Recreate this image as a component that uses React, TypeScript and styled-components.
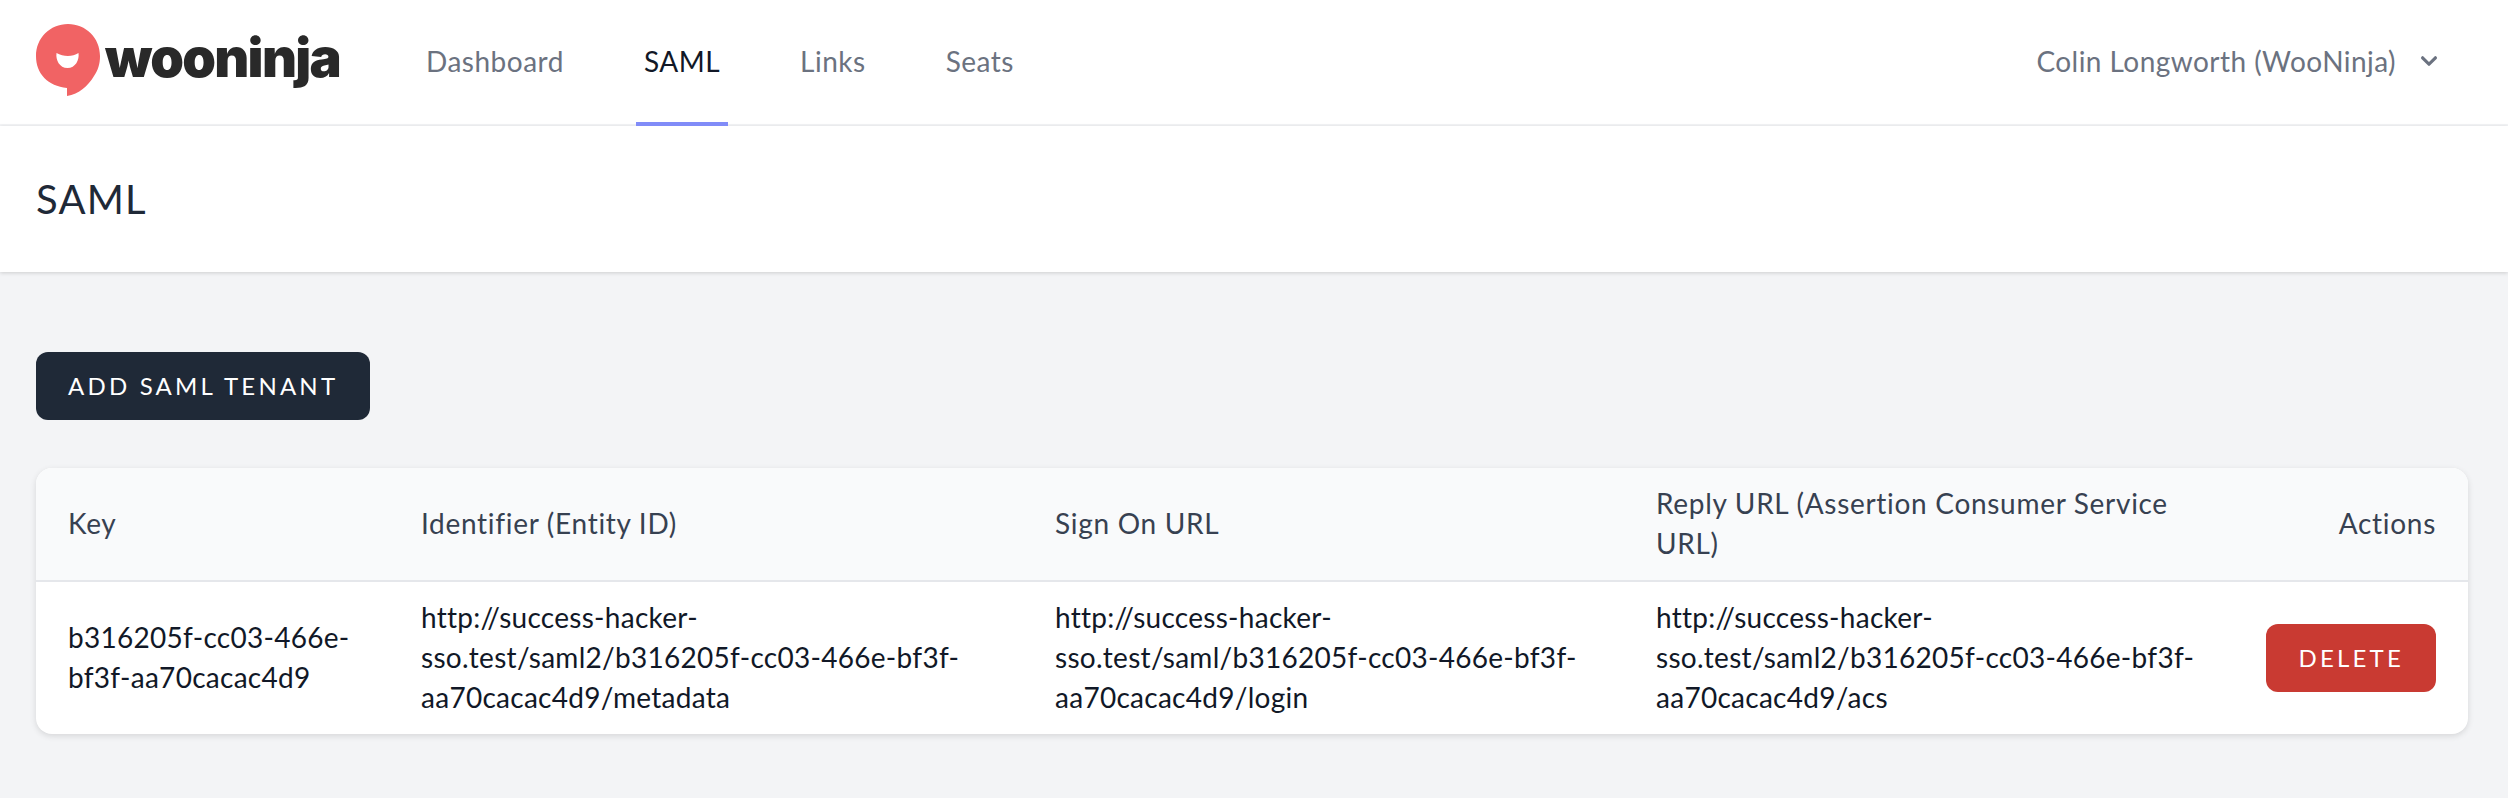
import styled, { createGlobalStyle } from "styled-components";

const GlobalStyle = createGlobalStyle`
  html, body {
    margin: 0;
    padding: 0;
    background: #f3f4f6;
  }
  body {
    font-family: "Lato", "Noto Sans", sans-serif;
    color: #111827;
  }
  * {
    box-sizing: border-box;
  }
`;

const Page = styled.div`
  min-height: 798px;
  background: #f3f4f6;
`;

const TopNav = styled.nav`
  height: 126px;
  padding: 0 63px 0 36px;
  display: flex;
  justify-content: space-between;
  background: #fff;
  box-shadow: inset 0 -2px 0 #f3f4f6;
`;

const NavLeft = styled.div`
  display: flex;
  align-items: stretch;
`;

const Logo = styled.div`
  width: 318px;
  display: flex;
  align-items: center;
  gap: 4px;
  margin-top: -6px;
`;

const LogoText = styled.span`
  font-family: "Inter", sans-serif;
  font-weight: 900;
  font-size: 54px;
  line-height: 1;
  letter-spacing: -1.7px;
  color: #292929;
  margin-top: -4px;
`;

const NavLinks = styled.div`
  display: flex;
  gap: 64px;
  margin-left: 64px;
`;

const NavLink = styled.a<{ $active?: boolean }>`
  display: flex;
  align-items: center;
  padding: 0 8px;
  font-size: 28px;
  letter-spacing: 0.5px;
  color: ${(props) => (props.$active ? "#111827" : "#6b7280")};
  border-bottom: 4px solid ${(props) => (props.$active ? "#818cf8" : "transparent")};
`;

const UserMenu = styled.div`
  display: flex;
  align-items: center;
  gap: 17px;
  font-size: 28px;
  letter-spacing: 0.45px;
  color: #6b7280;
  margin-top: -4px;

  svg {
    width: 32px;
    height: 32px;
    fill: currentColor;
  }
`;

const PageHeader = styled.header`
  background: #fff;
  padding: 45px 36px;
  box-shadow: 0 1px 4px rgba(0, 0, 0, 0.16);
`;

const Title = styled.h2`
  margin: 0;
  font-size: 40px;
  line-height: 56px;
  letter-spacing: 1.2px;
  font-weight: 400;
  color: #1f2937;
`;

const Main = styled.main`
  padding: 80px 40px 64px 36px;
`;

const Button = styled.button<{ $danger?: boolean }>`
  height: 68px;
  padding: 0 32px 2px;
  border: 0;
  border-radius: 12px;
  font-family: inherit;
  font-size: 24px;
  letter-spacing: 3.2px;
  text-transform: uppercase;
  color: #fff;
  background: ${(props) => (props.$danger ? "#c93a32" : "#1f2937")};
`;

const Card = styled.div`
  margin-top: 48px;
  background: #fff;
  border-radius: 16px;
  overflow: hidden;
  box-shadow: 0 2px 6px rgba(0, 0, 0, 0.12);
`;

const Table = styled.table`
  width: 100%;
  table-layout: fixed;
  border-collapse: collapse;
  font-size: 28px;
  line-height: 40px;
`;

const Col = styled.col<{ $width: number }>`
  width: ${(props) => props.$width}px;
`;

const HeadRow = styled.tr`
  background: #f9fafb;
  border-bottom: 2px solid #e5e7eb;
`;

const HeadCell = styled.th<{ $right?: boolean }>`
  padding: 15px 32px 17px;
  font-weight: 400;
  letter-spacing: 0.7px;
  color: #374151;
  text-align: ${(props) => (props.$right ? "right" : "left")};
`;

const Cell = styled.td<{ $right?: boolean }>`
  padding: 15px 32px 17px;
  letter-spacing: 0.28px;
  color: #111827;
  text-align: ${(props) => (props.$right ? "right" : "left")};
  overflow-wrap: anywhere;
`;

const ActionCell = styled(Cell)`
  padding: 16px 32px;
`;

function Bubble() {
  return (
    <svg width="65" height="72" viewBox="0 0 65 72">
      <path
        d="M32 0C50 0 64 14 64 32c0 8-2 14-6 20-6 10-15 18-27 20v-8C12 62 0 50 0 32 0 14 14 0 32 0z"
        fill="#f16364"
      />
      <path
        d="M20.5 29c7 4 16 4 22 0 1 7-3 15-11 15s-12-8-11-15z"
        fill="#fff"
      />
    </svg>
  );
}

function App() {
  return (
    <Page>
      <GlobalStyle />
      <TopNav>
        <NavLeft>
          <Logo>
            <Bubble />
            <LogoText>wooninja</LogoText>
          </Logo>
          <NavLinks>
            <NavLink>Dashboard</NavLink>
            <NavLink $active>SAML</NavLink>
            <NavLink>Links</NavLink>
            <NavLink>Seats</NavLink>
          </NavLinks>
        </NavLeft>
        <UserMenu>
          Colin Longworth (WooNinja)
          <svg viewBox="0 0 20 20">
            <path d="M5.293 7.293a1 1 0 011.414 0L10 10.586l3.293-3.293a1 1 0 111.414 1.414l-4 4a1 1 0 01-1.414 0l-4-4a1 1 0 010-1.414z" />
          </svg>
        </UserMenu>
      </TopNav>
      <PageHeader>
        <Title>SAML</Title>
      </PageHeader>
      <Main>
        <Button>Add SAML Tenant</Button>
        <Card>
          <Table>
            <colgroup>
              <Col $width={353} />
              <Col $width={634} />
              <Col $width={601} />
              <Col $width={609} />
              <Col $width={235} />
            </colgroup>
            <thead>
              <HeadRow>
                <HeadCell>Key</HeadCell>
                <HeadCell>Identifier (Entity ID)</HeadCell>
                <HeadCell>Sign On URL</HeadCell>
                <HeadCell>Reply URL (Assertion Consumer Service URL)</HeadCell>
                <HeadCell $right>Actions</HeadCell>
              </HeadRow>
            </thead>
            <tbody>
              <tr>
                <Cell>b316205f-cc03-466e-bf3f-aa70cacac4d9</Cell>
                <Cell>http://success-hacker-sso.test/saml2/b316205f-cc03-466e-bf3f-aa70cacac4d9/metadata</Cell>
                <Cell>http://success-hacker-sso.test/saml/b316205f-cc03-466e-bf3f-aa70cacac4d9/login</Cell>
                <Cell>http://success-hacker-sso.test/saml2/b316205f-cc03-466e-bf3f-aa70cacac4d9/acs</Cell>
                <ActionCell $right>
                  <Button $danger>Delete</Button>
                </ActionCell>
              </tr>
            </tbody>
          </Table>
        </Card>
      </Main>
    </Page>
  );
}

export default App;
